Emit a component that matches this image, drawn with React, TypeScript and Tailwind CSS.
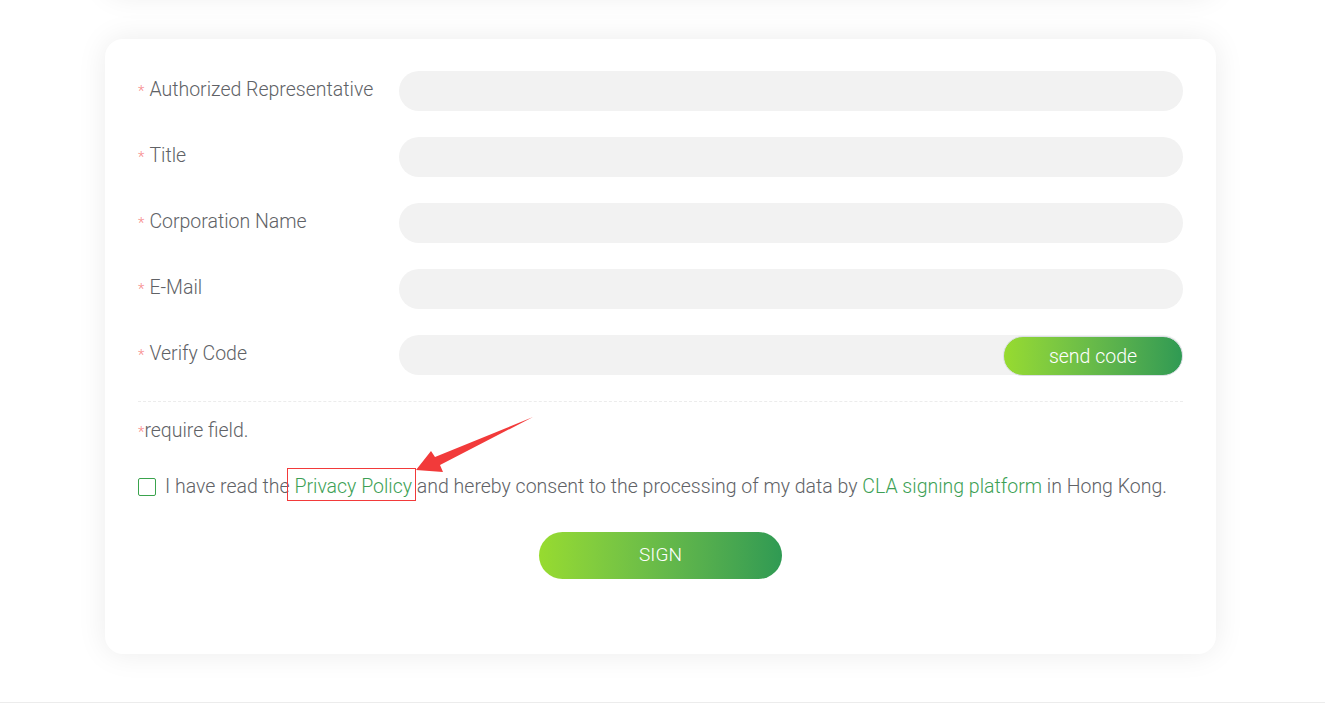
import React, { useState } from 'react'

const fields = ['Authorized Representative', 'Title', 'Corporation Name', 'E-Mail', 'Verify Code']

function FieldRow({ label, withCode }: { label: string; withCode?: boolean }) {
  return (
    <div className="flex items-start">
      <label className="w-[261px] shrink-0 pt-[6px] text-[19.5px] font-light leading-[26px] text-[#606266]">
        <span className="mr-[5px] text-[15px] text-[#f78989]">*</span>
        {label}
      </label>
      <div className="relative h-10 flex-1 rounded-full bg-[#f2f2f2]">
        {withCode && (
          <button className="absolute right-0 top-px h-[40px] w-[180px] rounded-full border border-[#dcdfe6] bg-gradient-to-r from-[#97db2f] to-[#2f9a53] pt-px text-[19.5px] font-light text-white">
            send code
          </button>
        )}
      </div>
    </div>
  )
}

export default function App() {
  const [agreed, setAgreed] = useState(false)

  return (
    <div className="relative h-[709px] overflow-hidden bg-white font-['Roboto',sans-serif]">
      {/* previous card's bottom edge */}
      <div className="ml-[105px] mr-[109px] -mt-[45px] h-10 rounded-[18px] bg-white shadow-[0_0_30px_rgba(0,0,0,0.08)]" />

      <div className="ml-[105px] mr-[109px] mt-[44px] rounded-[18px] bg-white px-[33px] pb-[75px] pt-[32px] shadow-[0_0_30px_rgba(0,0,0,0.08)]">
        <div className="flex flex-col gap-[26px]">
          {fields.map((f) => (
            <FieldRow key={f} label={f} withCode={f === 'Verify Code'} />
          ))}
        </div>

        <div className="mt-[26px] border-t border-dashed border-[#ececec]" />

        <p className="mt-[16px] text-[19.5px] font-light leading-[26px] text-[#606266]">
          <span className="text-[15px] text-[#f78989]">*</span>require field.
        </p>

        <div className="mt-[29px] flex items-center">
          <button
            onClick={() => setAgreed(!agreed)}
            className="h-[18px] w-[18px] shrink-0 rounded-[2px] border border-[#3aa34d] bg-white"
          >
            {agreed && <span className="block text-[12px] leading-none text-[#3aa34d]">✓</span>}
          </button>
          <p className="ml-[9px] whitespace-nowrap text-[19.5px] font-light leading-[26px] text-[#606266]">
            I have read the{' '}
            <span className="relative text-[#3d9f55]">
              Privacy Policy
              <span className="absolute -left-[7px] -right-[4px] -top-[7px] -bottom-[3px] border border-[#f23a3a]" />
            </span>{' '}
            and hereby consent to the processing of my data by{' '}
            <span className="text-[#3d9f55]">CLA signing platform</span> in Hong Kong.
          </p>
        </div>

        <div className="mt-[32px] flex justify-center">
          <button className="h-[47px] w-[243px] rounded-full bg-gradient-to-r from-[#97db2f] to-[#2f9a53] text-[19px] font-light text-white">
            SIGN
          </button>
        </div>
      </div>

      <div className="absolute bottom-[6px] left-0 right-0 border-t border-[#ececec]" />

      {/* annotation arrow */}
      <svg className="pointer-events-none absolute left-0 top-0" width="1325" height="709">
        <polygon
          points="416,470 431,451 435,457 533,417 440,465 443,472"
          fill="#f23a3a"
        />
      </svg>
    </div>
  )
}
